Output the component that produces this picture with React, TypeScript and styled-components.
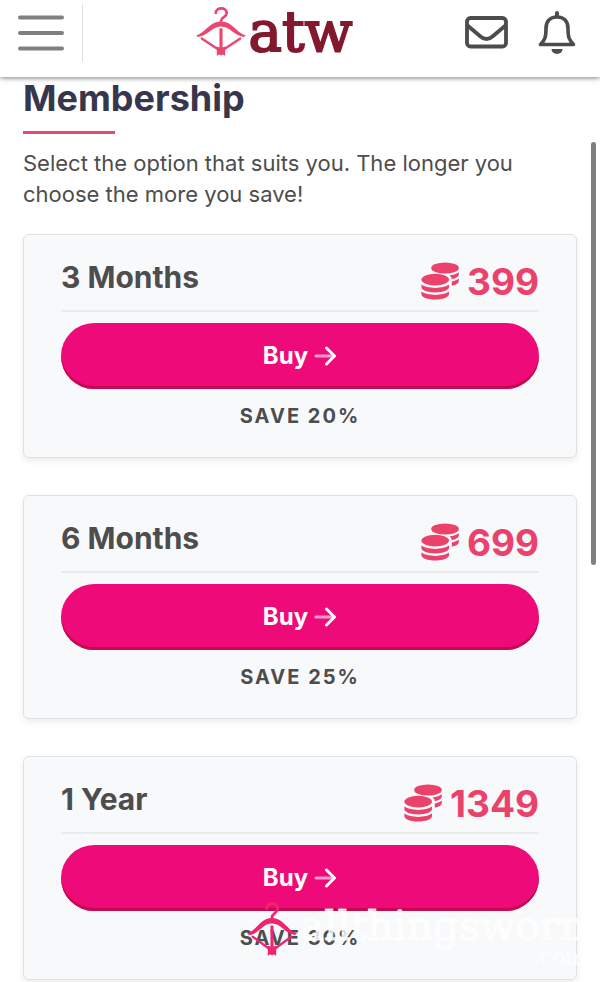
import React from 'react';
import styled, { createGlobalStyle } from 'styled-components';

const GlobalStyle = createGlobalStyle`
  *, *::before, *::after { box-sizing: border-box; }
  html { scrollbar-width: none; }
  body {
    margin: 0;
    background: #fff;
    color: #4d4d4d;
    font-family: Inter, "Liberation Sans", sans-serif;
    font-optical-sizing: none;
  }
`;

const Page = styled.div`
  position: relative;
  overflow: hidden;
`;

const Header = styled.header`
  position: relative;
  z-index: 1;
  display: flex;
  align-items: center;
  justify-content: space-between;
  height: 77px;
  padding: 0 24px 12px 18px;
  background: #fff;
  box-shadow: 0 1px 5px rgba(0, 0, 0, 0.5);
`;

const Side = styled.div<{ $end?: boolean }>`
  display: flex;
  align-items: center;
  gap: ${(p) => (p.$end ? 29 : 18)}px;
`;

const IconButton = styled.button`
  display: flex;
  padding: 0;
  border: 0;
  background: none;
  color: #4c4c4c;
  cursor: pointer;
`;

const Divider = styled.span`
  width: 1px;
  height: 58px;
  background: #e2e2e2;
`;

const Logo = styled.a`
  display: flex;
  align-items: center;
  gap: 3px;
  padding-bottom: 2px;
  color: #82192f;
  text-decoration: none;
  font: 56px/62px "DejaVu Serif", serif;
  -webkit-text-stroke: 2px #82192f;
`;

const Main = styled.main`
  padding: 0 23px 2px;
`;

const Title = styled.h1`
  margin: 0;
  font-size: 36px;
  line-height: 43px;
  font-weight: 700;
  color: #38364d;

  &::after {
    content: '';
    display: block;
    width: 92px;
    height: 3px;
    margin-top: 11px;
    background: #e64a70;
  }
`;

const Intro = styled.p`
  margin: 14px 0 24px;
  font-size: 22px;
  line-height: 31px;
`;

const Plans = styled.div`
  display: grid;
  gap: 37px;
`;

const Card = styled.section`
  padding: 23px 37px 27px;
  border: 1px solid #dfe2e5;
  border-radius: 6px;
  background: #f8f9fb;
  box-shadow: 0 3px 6px rgba(0, 0, 0, 0.08);
`;

const CardHead = styled.div`
  display: flex;
  justify-content: space-between;
  height: 54px;
  border-bottom: 2px solid #e9ebed;
`;

const PlanName = styled.h2`
  margin: 0;
  font-size: 30px;
  line-height: 38px;
  font-weight: 700;
`;

const Price = styled.div`
  display: flex;
  align-items: center;
  gap: 8px;
  height: 46px;
  color: #ea426a;
  font-size: 37px;
  font-weight: 700;
`;

const BuyButton = styled.button`
  display: flex;
  align-items: center;
  justify-content: center;
  gap: 6px;
  width: 100%;
  height: 66px;
  margin-top: 11px;
  padding: 0;
  border: 0;
  border-radius: 33px;
  background: #ef0a7a;
  box-shadow: inset 0 -3px 0 #c60a4f;
  color: #fff;
  font: 700 24px/32px Inter, "Liberation Sans", sans-serif;
  cursor: pointer;
`;

const Saving = styled.p`
  margin: 13px 0 0;
  text-align: center;
  font-size: 20px;
  line-height: 28px;
  font-weight: 700;
  letter-spacing: 2px;
`;

const ScrollThumb = styled.div`
  position: absolute;
  top: 142px;
  right: 4px;
  width: 5px;
  height: 423px;
  border-radius: 3px;
  background: #808080;
`;

const Watermark = styled.div`
  position: absolute;
  right: 14px;
  bottom: 14px;
  display: flex;
  align-items: flex-end;
  gap: 3px;
  color: rgba(255, 255, 255, 0.8);
  font-family: "DejaVu Serif", serif;
  pointer-events: none;

  svg { margin-bottom: 12px; }
`;

const WatermarkText = styled.div`
  font-size: 41px;
  line-height: 44px;
  white-space: nowrap;
  -webkit-text-stroke: 1px rgba(255, 255, 255, 0.8);
`;

const WatermarkDomain = styled.div`
  text-align: right;
  font-size: 22px;
  line-height: 20px;
  -webkit-text-stroke: 0;
`;

function Hanger({ color, width, height }: { color: string; width: number; height: number }) {
  return (
    <svg width={width} height={height} viewBox="0 0 48 49" preserveAspectRatio="none" fill="none" stroke={color} aria-hidden="true">
      <path d="M19 6C19-.2 29.500-.2 29.500 6c0 4.200-5.500 4-5.500 8v2" strokeWidth="2.600" strokeLinecap="round" />
      <path d="M0 28.500C9 26 13 14.500 24 14.500s15 11.500 24 14l-2 1.500C36 28.500 33 19.500 24 19.500S12 28.500 2 30z" fill={color} stroke="none" />
      <path d="M5.500 31.500 20 41.500M42.500 31.500 28 41.500" strokeWidth="2.200" strokeLinecap="round" />
      <path d="M24 22.500V43" strokeWidth="3" strokeLinecap="round" />
      <path d="M20 39.500l4 1.500 4-1.500v9.500l-2-1.500-2 1-2-1-2 1.500z" fill={color} stroke="none" />
    </svg>
  );
}

function MenuIcon() {
  return (
    <svg width="46" height="36" viewBox="0 0 46 36" stroke="#808080" strokeWidth="4" strokeLinecap="round" aria-hidden="true">
      <path d="M2 2.500h42M2 18h42M2 33.500h42" />
    </svg>
  );
}

function MailIcon() {
  return (
    <svg width="44" height="34" viewBox="0 0 44 34" fill="none" stroke="currentColor" strokeWidth="3.800" aria-hidden="true">
      <rect x="2" y="2" width="39" height="28.500" rx="3.500" />
      <path d="M2.500 9.500l13 11c4 3.400 8 3.400 12 0l13-11" />
    </svg>
  );
}

function BellIcon() {
  return (
    <svg width="38" height="44" viewBox="0 1 38 44" aria-hidden="true">
      <path d="M19 7C11.500 7 8 12 8 18.500 8 27 7 30 2.500 34.500h33C31 30 30 27 30 18.500 30 12 26.500 7 19 7z" fill="none" stroke="currentColor" strokeWidth="3.600" strokeLinejoin="round" />
      <path d="M19 3v3" stroke="currentColor" strokeWidth="4" strokeLinecap="round" />
      <path d="M13.500 39h11c-.4 6.500-10.600 6.500-11 0z" fill="currentColor" />
    </svg>
  );
}

function CoinsIcon() {
  return (
    <svg width="38" height="38" viewBox="0 0 38 38" fill="currentColor" aria-hidden="true">
      <ellipse cx="24" cy="6" rx="13.800" ry="5.600" />
      <path d="M28.500 13.300c4-.5 7.400-1.500 9.300-3.100v2.300c0 2.100-2.900 3.900-7 4.700-.1-1.600-.9-2.900-2.300-3.900z" />
      <path d="M30.800 19.500c3-.6 5.500-1.600 7-2.900v2.500c0 2.200-2.900 3.900-7 4.700z" />
      <ellipse cx="14.200" cy="17.600" rx="13.800" ry="5.800" />
      <path d="M.4 22.600c6 4.400 21.600 4.400 27.600 0v2.400c0 3.200-6.200 5.400-13.800 5.400S.4 28.200.4 25z" />
      <path d="M.4 29.600c6 4.400 21.600 4.400 27.600 0V32c0 3.300-6.200 5.500-13.800 5.500S.4 35.300.4 32z" />
    </svg>
  );
}

function ArrowIcon() {
  return (
    <svg width="23" height="20" viewBox="0 0 23 20" fill="none" stroke="#fff" strokeWidth="3" strokeLinecap="round" strokeLinejoin="round" aria-hidden="true">
      <path d="M2 10h17" opacity=".6" />
      <path d="M12.500 2l8 8-8 8" />
    </svg>
  );
}

const plans = [
  { name: '3 Months', price: 399, save: 20 },
  { name: '6 Months', price: 699, save: 25 },
  { name: '1 Year', price: 1349, save: 30 },
];

export default function App() {
  return (
    <Page>
      <GlobalStyle />
      <Header>
        <Side>
          <IconButton aria-label="Menu"><MenuIcon /></IconButton>
          <Divider />
        </Side>
        <Logo href="#">
          <Hanger color="#ec456f" width={50} height={49} />
          atw
        </Logo>
        <Side $end>
          <IconButton aria-label="Messages"><MailIcon /></IconButton>
          <IconButton aria-label="Notifications"><BellIcon /></IconButton>
        </Side>
      </Header>
      <Main>
        <Title>Membership</Title>
        <Intro>Select the option that suits you. The longer you choose the more you save!</Intro>
        <Plans>
          {plans.map((plan) => (
            <Card key={plan.name}>
              <CardHead>
                <PlanName>{plan.name}</PlanName>
                <Price><CoinsIcon />{plan.price}</Price>
              </CardHead>
              <BuyButton>Buy <ArrowIcon /></BuyButton>
              <Saving>SAVE {plan.save}%</Saving>
            </Card>
          ))}
        </Plans>
      </Main>
      <ScrollThumb />
      <Watermark>
        <Hanger color="#f0246f" width={50} height={54} />
        <WatermarkText>
          allthingsworn
          <WatermarkDomain>.com</WatermarkDomain>
        </WatermarkText>
      </Watermark>
    </Page>
  );
}
